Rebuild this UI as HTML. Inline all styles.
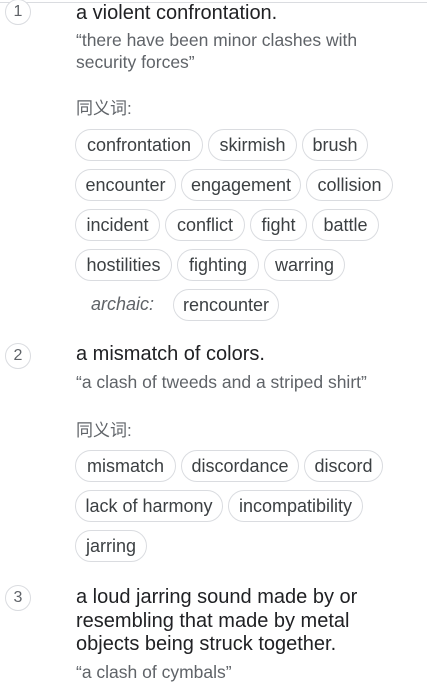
<!DOCTYPE html>
<html><head><meta charset="utf-8"><style>
html,body{margin:0;padding:0;width:427px;height:698px;overflow:hidden;background:#fff;font-family:"Liberation Sans","Noto Sans CJK SC",sans-serif;}
.a{position:absolute;white-space:nowrap;}
.topline{position:absolute;left:0;top:2px;width:427px;height:1px;background:#dadce0;}
.num{position:absolute;left:5px;width:24px;height:24px;border:1px solid #dadce0;border-radius:50%;text-align:center;line-height:24px;font-size:16px;color:#5f6368;background:#fff;}
.t{font-size:20px;color:#202124;line-height:23.5px;}
.ex{font-size:17.5px;color:#5f6368;line-height:22px;}
.syn{font-size:17px;color:#5f6368;}
.c{position:absolute;height:30px;border:1px solid #dadce0;border-radius:16px;box-sizing:content-box;text-align:center;line-height:30px;font-size:18px;color:#3c4043;white-space:nowrap;}
</style></head><body>
<div class="topline"></div>
<div class="num" style="top:-1px;">1</div>
<div class="a t" style="left:76px;top:2px;">a violent confrontation.</div>
<div class="a ex" style="left:76px;top:29px;">“there have been minor clashes with<br>security forces”</div>
<div class="a syn" style="left:76px;top:94px;">同义词:</div>

<div class="c" style="left:75px;top:129px;width:126px;">confrontation</div>
<div class="c" style="left:208px;top:129px;width:87px;">skirmish</div>
<div class="c" style="left:302px;top:129px;width:64px;">brush</div>
<div class="c" style="left:75px;top:169px;width:99px;">encounter</div>
<div class="c" style="left:181px;top:169px;width:118px;">engagement</div>
<div class="c" style="left:306px;top:169px;width:85px;">collision</div>
<div class="c" style="left:75px;top:209px;width:83px;">incident</div>
<div class="c" style="left:165px;top:209px;width:78px;">conflict</div>
<div class="c" style="left:250px;top:209px;width:55px;">fight</div>
<div class="c" style="left:312px;top:209px;width:65px;">battle</div>
<div class="c" style="left:75px;top:249px;width:95px;">hostilities</div>
<div class="c" style="left:177px;top:249px;width:80px;">fighting</div>
<div class="c" style="left:264px;top:249px;width:79px;">warring</div>
<div class="a" style="left:91px;top:294px;font-size:18px;font-style:italic;color:#5f6368;">archaic:</div>
<div class="c" style="left:173px;top:289px;width:104px;">rencounter</div>

<div class="num" style="top:343px;">2</div>
<div class="a t" style="left:76px;top:343px;">a mismatch of colors.</div>
<div class="a ex" style="left:76px;top:371px;">“a clash of tweeds and a striped shirt”</div>
<div class="a syn" style="left:76px;top:416px;">同义词:</div>
<div class="c" style="left:75px;top:450px;width:99px;">mismatch</div>
<div class="c" style="left:181px;top:450px;width:116px;">discordance</div>
<div class="c" style="left:304px;top:450px;width:77px;">discord</div>
<div class="c" style="left:75px;top:490px;width:146px;">lack of harmony</div>
<div class="c" style="left:228px;top:490px;width:133px;">incompatibility</div>
<div class="c" style="left:75px;top:530px;width:70px;">jarring</div>

<div class="num" style="top:585px;">3</div>
<div class="a t" style="left:76px;top:586px;">a loud jarring sound made by or<br>resembling that made by metal<br>objects being struck together.</div>
<div class="a ex" style="left:76px;top:661px;">“a clash of cymbals”</div>
</body></html>
